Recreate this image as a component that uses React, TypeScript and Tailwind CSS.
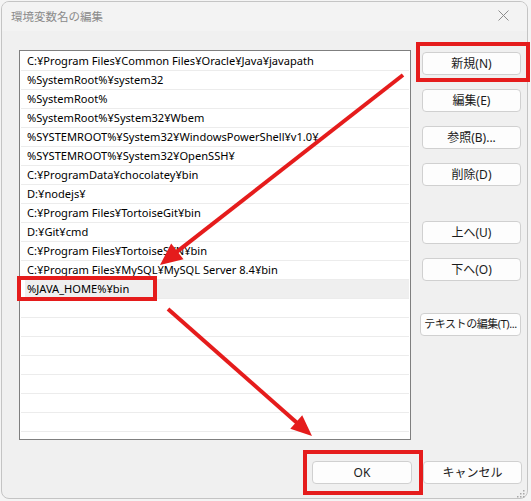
import React from "react";

const paths = [
  "C:¥Program Files¥Common Files¥Oracle¥Java¥javapath",
  "%SystemRoot%¥system32",
  "%SystemRoot%",
  "%SystemRoot%¥System32¥Wbem",
  "%SYSTEMROOT%¥System32¥WindowsPowerShell¥v1.0¥",
  "%SYSTEMROOT%¥System32¥OpenSSH¥",
  "C:¥ProgramData¥chocolatey¥bin",
  "D:¥nodejs¥",
  "C:¥Program Files¥TortoiseGit¥bin",
  "D:¥Git¥cmd",
  "C:¥Program Files¥TortoiseSVN¥bin",
  "C:¥Program Files¥MySQL¥MySQL Server 8.4¥bin",
  "%JAVA_HOME%¥bin",
];

const SELECTED = 12;
const TOTAL_ROWS = 21;

function Btn({ label, className = "" }: { label: string; className?: string }) {
  return (
    <div
      className={
        "h-[23px] flex items-center justify-center rounded-[4px] border border-[#d0d0d0] bg-[#fdfdfd] text-[#1b1b1b] whitespace-nowrap " +
        className
      }
    >
      {label}
    </div>
  );
}

function Arrow({
  x1,
  y1,
  x2,
  y2,
  len,
  half,
}: {
  x1: number;
  y1: number;
  x2: number;
  y2: number;
  len: number;
  half: number;
}) {
  const dx = x2 - x1;
  const dy = y2 - y1;
  const d = Math.hypot(dx, dy);
  const ux = dx / d;
  const uy = dy / d;
  const bx = x2 - ux * len;
  const by = y2 - uy * len;
  const nx = -uy;
  const ny = ux;
  const pts = `${x2},${y2} ${bx + nx * half},${by + ny * half} ${bx - nx * half},${by - ny * half}`;
  return (
    <g>
      <line x1={x1} y1={y1} x2={bx + ux * 2} y2={by + uy * 2} stroke="#e51c1c" strokeWidth={4} />
      <polygon points={pts} fill="#e51c1c" />
    </g>
  );
}

export default function App() {
  const rows = Array.from({ length: TOTAL_ROWS }, (_, i) => paths[i] ?? "");
  return (
    <div className="relative w-[531px] h-[501px] overflow-hidden bg-[#f4f4f4] font-['Noto_Sans','Noto_Sans_CJK_JP',sans-serif]">
      {/* dialog window */}
      <div className="ml-[1px] mt-[1px] w-[527px] h-[498px] rounded-[8px] border border-[#c4c4c4] bg-[#f0f0f0] flex flex-col overflow-hidden">
        {/* title bar */}
        <div className="h-[29px] shrink-0 bg-[#f3f3f3] flex items-center justify-between pl-[9px] pr-[18px]">
          <span className="text-[11.5px] text-[#8a8a8a] font-['Noto_Sans_CJK_JP',sans-serif]">環境変数名の編集</span>
          <svg width="11" height="11" viewBox="0 0 11 11" className="mt-[-2px]">
            <path d="M0.5 0.5 L10.5 10.5 M10.5 0.5 L0.5 10.5" stroke="#8c8c8c" strokeWidth="1" />
          </svg>
        </div>

        {/* body */}
        <div className="flex flex-col pt-[19px] pl-[17px]">
          <div className="flex">
            {/* path list */}
            <div className="w-[392px] h-[390px] border border-[#7f7f7f] bg-white overflow-hidden pt-[1px] px-[1px]">
              {rows.map((t, i) => (
                <div
                  key={i}
                  className="h-[19px] box-border border-b border-[#ececec] flex items-center text-[11.1px] text-black leading-none whitespace-nowrap"
                >
                  {i === SELECTED ? (
                    <div className="ml-[4px] h-full flex-1 bg-[#efefef] flex items-center pl-[2px]">{t}</div>
                  ) : (
                    <span className="pl-[6px]">{t}</span>
                  )}
                </div>
              ))}
            </div>

            {/* action buttons */}
            <div className="ml-[11px] w-[99px] flex flex-col pt-[2px] text-[12px]">
              <Btn label="新規(N)" />
              <Btn label="編集(E)" className="mt-[14px]" />
              <Btn label="参照(B)..." className="mt-[14px]" />
              <Btn label="削除(D)" className="mt-[14px]" />
              <Btn label="上へ(U)" className="mt-[35px]" />
              <Btn label="下へ(O)" className="mt-[14px]" />
              <Btn label="テキストの編集(T)..." className="mt-[32px] -ml-[2px] text-[11px] tracking-[-0.04em]" />
            </div>
          </div>

          {/* dialog footer */}
          <div className="flex mt-[21px] pl-[293px] gap-[11px] text-[12px]">
            <Btn label="OK" className="w-[100px]" />
            <Btn label="キャンセル" className="w-[99px]" />
          </div>
        </div>
      </div>

      {/* annotations and size grip */}
      <svg className="absolute inset-0 pointer-events-none" width="531" height="501" viewBox="0 0 531 501">
        <g fill="#a8a8a8">
          <rect x="523" y="490" width="1.5" height="1.5" />
          <rect x="520" y="493" width="1.5" height="1.5" />
          <rect x="523" y="493" width="1.5" height="1.5" />
          <rect x="517" y="496" width="1.5" height="1.5" />
          <rect x="520" y="496" width="1.5" height="1.5" />
          <rect x="523" y="496" width="1.5" height="1.5" />
        </g>
        <g fill="none" stroke="#e51c1c" strokeWidth="4">
          <rect x="418" y="44" width="110" height="36" />
          <rect x="19" y="278" width="136" height="21" />
          <rect x="305" y="452" width="116" height="41" />
        </g>
        <Arrow x1={403} y1={75} x2={160} y2={265} len={22} half={10} />
        <Arrow x1={168} y1={309} x2={312} y2={436} len={21} half={9} />
      </svg>
    </div>
  );
}
